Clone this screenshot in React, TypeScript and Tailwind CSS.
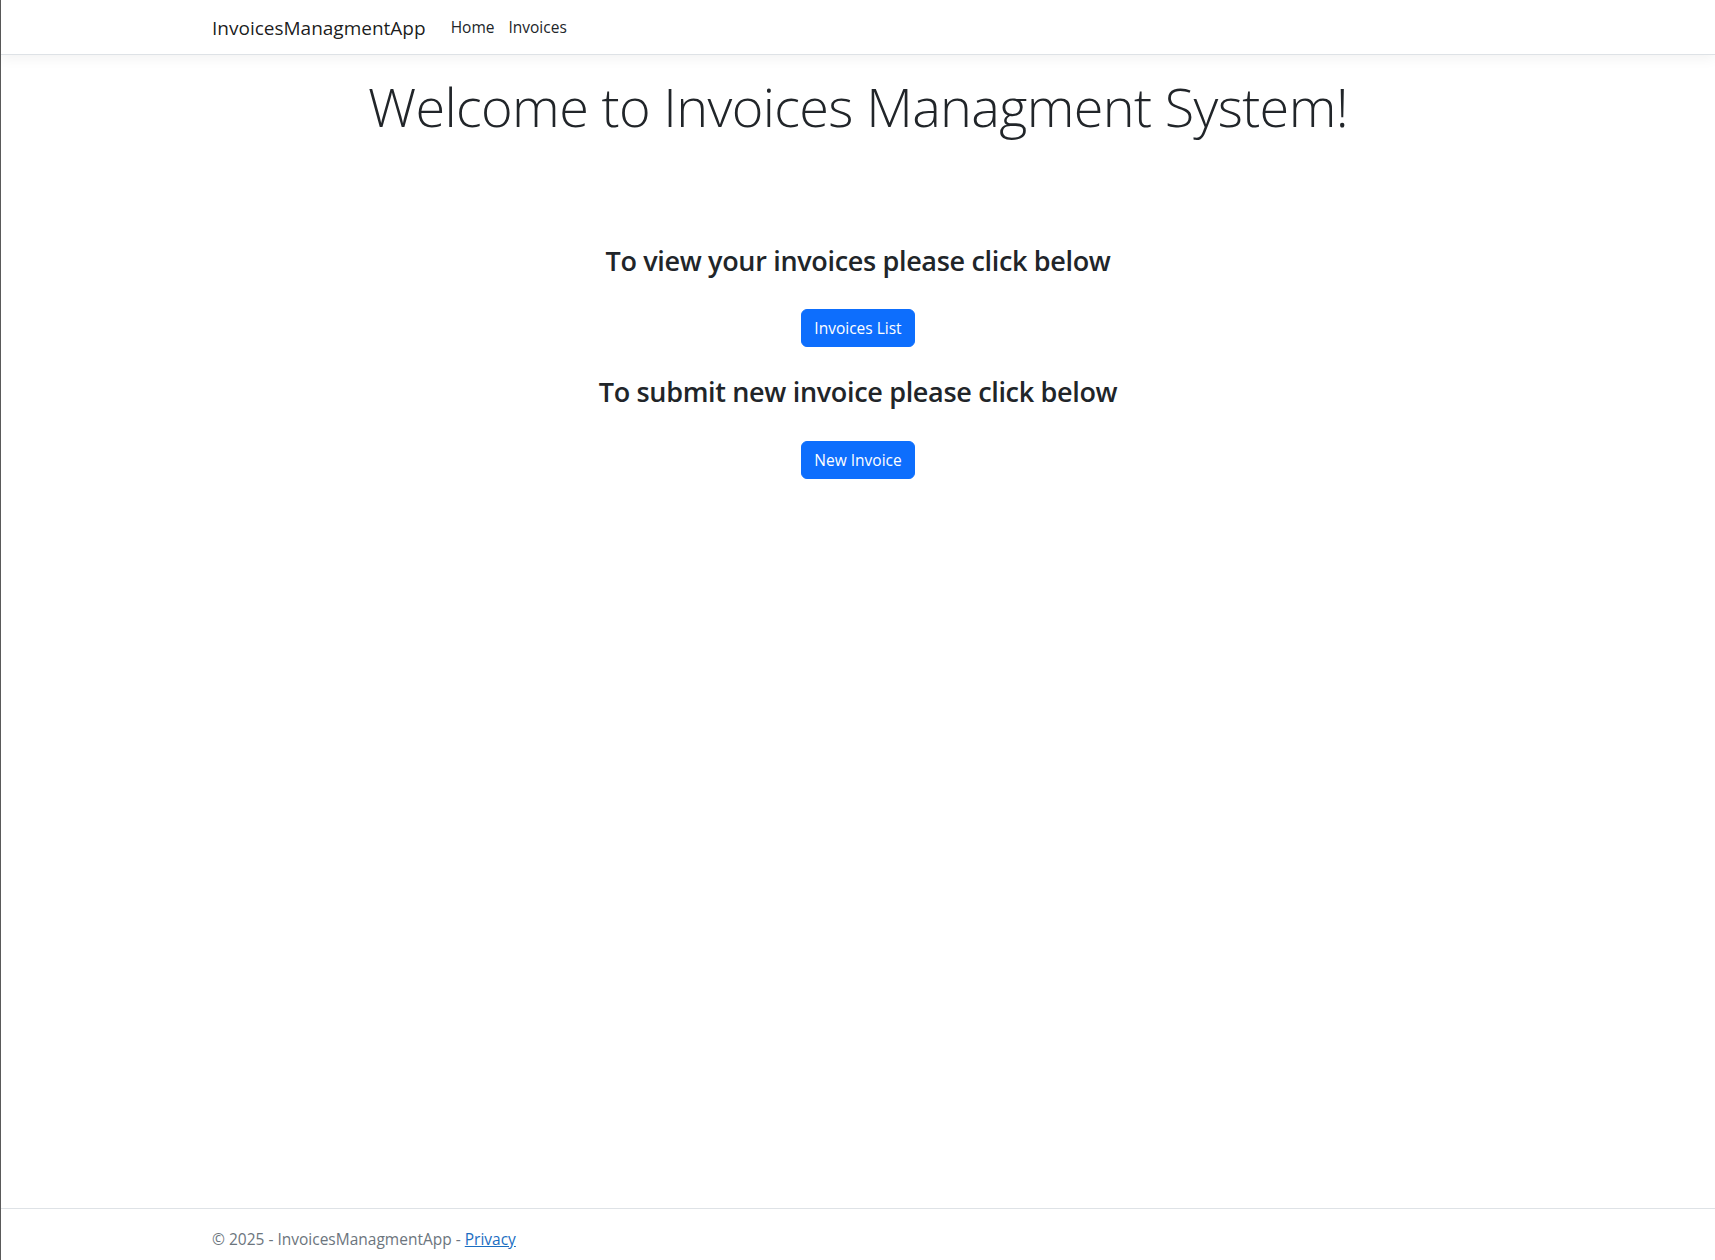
import React from "react";

function NavBar() {
  return (
    <header className="h-[55px] bg-white border-b border-[#dee2e6] shadow-[0_4px_12px_rgba(0,0,0,0.05)]">
      <nav className="max-w-[1320px] h-full mx-auto pl-[14px] pr-3 flex items-center">
        <a href="#" className="text-[19px] text-black/90 mr-[17px] pt-[2px]">
          InvoicesManagmentApp
        </a>
        <ul className="flex pt-[2px]">
          <li>
            <a href="#" className="block px-2 text-[15.5px] text-[#212529]">
              Home
            </a>
          </li>
          <li>
            <a href="#" className="block pl-[6px] pr-2 text-[15.5px] text-[#212529]">
              Invoices
            </a>
          </li>
        </ul>
      </nav>
    </header>
  );
}

function ActionBlock({ title, label }: { title: string; label: string }) {
  return (
    <div className="flex flex-col items-center">
      <h3 className="text-[27px] font-semibold leading-[1.2] tracking-[-0.33px] mb-[32px]">{title}</h3>
      <a
        href="#"
        className="inline-block bg-[#0d6efd] text-white text-[15.5px] leading-[24px] px-3 py-[6px] rounded-[6px] border border-[#0d6efd]"
      >
        {label}
      </a>
    </div>
  );
}

export default function App() {
  return (
    <div className="min-h-screen flex flex-col bg-white border-l border-[#5a5a5a] text-[#212529] font-['Open_Sans',sans-serif]">
      <NavBar />

      <main className="flex-1 pt-[19px] text-center">
        <h1 className="text-[54px] font-light leading-[1.2] tracking-[-0.65px] mb-[106px]">
          Welcome to Invoices Managment System!
        </h1>
        <div className="flex flex-col gap-[29px]">
          <ActionBlock title="To view your invoices please click below" label="Invoices List" />
          <ActionBlock title="To submit new invoice please click below" label="New Invoice" />
        </div>
      </main>

      <footer className="h-[52px] overflow-hidden border-t border-[#dee2e6]">
        <div className="max-w-[1320px] mx-auto pl-[14px] pr-3 leading-[60px] text-[15.5px] text-[#6c757d] whitespace-nowrap">
          © 2025 - InvoicesManagmentApp -{" "}
          <a href="#" className="text-[#1b6ec2] underline">
            Privacy
          </a>
        </div>
      </footer>
    </div>
  );
}
